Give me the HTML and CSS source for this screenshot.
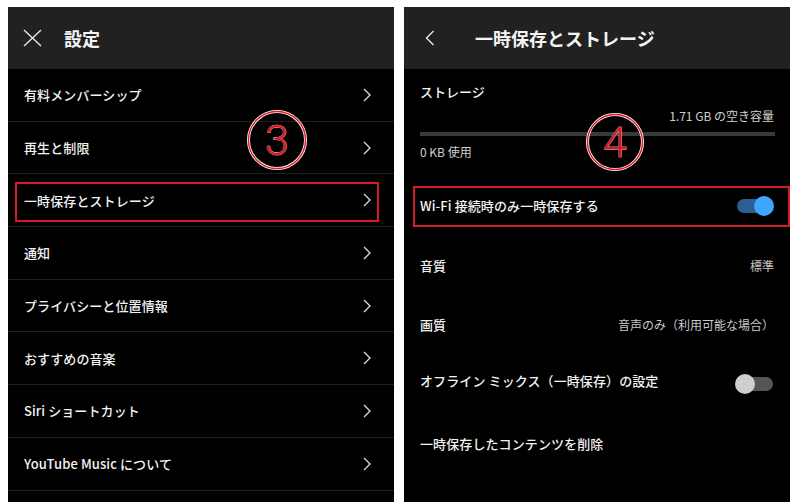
FILE: index.html
```html
<!DOCTYPE html>
<html lang="ja">
<head>
<meta charset="utf-8">
<link rel="stylesheet" href="styles.css">
</head>
<body>
<div class="page">
  <section class="panel">
    <header class="bar">
      <svg class="close" width="19" height="18" viewBox="0 0 19 18"><path d="M1 1 L18 17 M18 1 L1 17" stroke="#e6e6e6" stroke-width="1.4" fill="none"/></svg>
      <h1 class="title">設定</h1>
    </header>
    <ul class="menu">
      <li class="item"><span>有料メンバーシップ</span><svg class="chev" width="8" height="14" viewBox="0 0 8 14"><path d="M1 1 L7 7 L1 13" stroke="#d8d8d8" stroke-width="1.4" fill="none"/></svg></li>
      <li class="item"><span>再生と制限</span><svg class="chev" width="8" height="14" viewBox="0 0 8 14"><path d="M1 1 L7 7 L1 13" stroke="#d8d8d8" stroke-width="1.4" fill="none"/></svg></li>
      <li class="item marked"><span>一時保存とストレージ</span><svg class="chev" width="8" height="14" viewBox="0 0 8 14"><path d="M1 1 L7 7 L1 13" stroke="#d8d8d8" stroke-width="1.4" fill="none"/></svg></li>
      <li class="item"><span>通知</span><svg class="chev" width="8" height="14" viewBox="0 0 8 14"><path d="M1 1 L7 7 L1 13" stroke="#d8d8d8" stroke-width="1.4" fill="none"/></svg></li>
      <li class="item"><span>プライバシーと位置情報</span><svg class="chev" width="8" height="14" viewBox="0 0 8 14"><path d="M1 1 L7 7 L1 13" stroke="#d8d8d8" stroke-width="1.4" fill="none"/></svg></li>
      <li class="item"><span>おすすめの音楽</span><svg class="chev" width="8" height="14" viewBox="0 0 8 14"><path d="M1 1 L7 7 L1 13" stroke="#d8d8d8" stroke-width="1.4" fill="none"/></svg></li>
      <li class="item"><span>Siri ショートカット</span><svg class="chev" width="8" height="14" viewBox="0 0 8 14"><path d="M1 1 L7 7 L1 13" stroke="#d8d8d8" stroke-width="1.4" fill="none"/></svg></li>
      <li class="item"><span>YouTube Music について</span><svg class="chev" width="8" height="14" viewBox="0 0 8 14"><path d="M1 1 L7 7 L1 13" stroke="#d8d8d8" stroke-width="1.4" fill="none"/></svg></li>
    </ul>
    <svg class="badge badge-3" width="64" height="64" viewBox="0 0 64 64">
      <circle cx="32" cy="32" r="28.5" fill="none" stroke="#ffffff" stroke-width="3"/>
      <circle cx="32" cy="32" r="28.5" fill="none" stroke="#e3151f" stroke-width="1.4"/>
      <text x="32" y="47" text-anchor="middle" class="badge-num">3</text>
    </svg>
  </section>

  <section class="panel">
    <header class="bar">
      <svg class="back" width="10" height="16" viewBox="0 0 10 16"><path d="M8.5 1 L1.5 8 L8.5 15" stroke="#e6e6e6" stroke-width="1.4" fill="none"/></svg>
      <h1 class="title title-r">一時保存とストレージ</h1>
    </header>
    <div class="storage">
      <div class="st-title">ストレージ</div>
      <div class="st-free">1.71 GB の空き容量</div>
      <div class="st-bar"></div>
      <div class="st-used">0 KB 使用</div>
    </div>
    <div class="row marked-r"><span class="label">Wi-Fi 接続時のみ一時保存する</span><span class="toggle on"><span class="knob"></span></span></div>
    <div class="row"><span class="label">音質</span><span class="value">標準</span></div>
    <div class="row"><span class="label">画質</span><span class="value">音声のみ（利用可能な場合）</span></div>
    <div class="row"><span class="label up">オフライン ミックス（一時保存）の設定</span><span class="toggle off"><span class="knob"></span></span></div>
    <div class="row"><span class="label">一時保存したコンテンツを削除</span></div>
    <svg class="badge badge-4" width="64" height="64" viewBox="0 0 64 64">
      <circle cx="32" cy="32" r="27.5" fill="none" stroke="#ffffff" stroke-width="3"/>
      <circle cx="32" cy="32" r="27.5" fill="none" stroke="#e3151f" stroke-width="1.4"/>
      <text x="32" y="47" text-anchor="middle" class="badge-num">4</text>
    </svg>
  </section>
</div>
</body>
</html>
```

FILE: styles.css
```css
* { box-sizing: border-box; }
html, body { margin: 0; padding: 0; background: #ffffff; }
body {
  width: 798px;
  height: 502px;
  overflow: hidden;
  font-family: "Noto Sans CJK JP", "Noto Sans", "Liberation Sans", sans-serif;
  color: #ffffff;
}
.page {
  display: flex;
  gap: 10px;
  padding: 7px 8px 0 8px;
  height: 502px;
}
.panel {
  position: relative;
  width: 386px;
  height: 495px;
  background: #000000;
  overflow: hidden;
}
.bar {
  height: 62px;
  background: #212121;
  display: flex;
  align-items: center;
}
.close { margin-left: 15px; margin-right: 22px; }
.back { margin-left: 21px; margin-right: 40px; }
.title {
  margin: 0;
  font-size: 18px;
  font-weight: 700;
  color: #f4f4f4;
  line-height: 24px;
}
.menu {
  list-style: none;
  margin: 0;
  padding: 0;
}
.item {
  position: relative;
  height: 52.7px;
  border-bottom: 1px solid #1e1e1e;
  display: flex;
  align-items: center;
  justify-content: space-between;
  padding: 0 23px 0 16px;
  font-size: 13px;
  font-weight: 500;
  letter-spacing: 0.1px;
  color: #f2f2f2;
}
.marked::after {
  content: "";
  position: absolute;
  left: 7px;
  right: 15px;
  top: 8px;
  bottom: 4px;
  border: 2px solid #d9182b;
}
.storage {
  padding: 13px 16px 0 16px;
}
.st-title {
  font-size: 13px;
  font-weight: 500;
  line-height: 20px;
  color: #f2f2f2;
}
.st-free {
  margin-top: 5px;
  text-align: right;
  font-size: 12px;
  line-height: 18px;
  color: #cfcfcf;
}
.st-bar {
  margin-top: 7px;
  height: 4px;
  background: #3a3a3a;
  margin-right: -1px;
}
.st-used {
  margin-top: 7px;
  font-size: 12px;
  line-height: 18px;
  color: #cfcfcf;
}
.row {
  position: relative;
  height: 59.4px;
  display: flex;
  align-items: center;
  justify-content: space-between;
  padding: 0 16px;
}
.storage + .row { margin-top: 15px; }
.label {
  font-size: 13px;
  font-weight: 500;
  letter-spacing: 0.1px;
  color: #f2f2f2;
}
.label.up { position: relative; top: -3px; }
.value {
  font-size: 12px;
  color: #c8c8c8;
}
.marked-r::after {
  content: "";
  position: absolute;
  left: 9px;
  right: 0px;
  top: 10px;
  bottom: 8px;
  border: 2px solid #d9182b;
}
.toggle {
  position: relative;
  width: 36px;
  height: 14px;
  border-radius: 7px;
  margin-right: 1px;
}
.toggle.on { background: #2b5f91; }
.toggle.off { background: #555555; }
.knob {
  position: absolute;
  top: -3px;
  width: 20px;
  height: 20px;
  border-radius: 50%;
}
.on .knob { right: -1px; background: #3ea6ff; }
.off .knob { left: -2px; background: #cfcfd2; }
.badge {
  position: absolute;
}
.badge-3 { left: 237px; top: 101px; }
.badge-4 { left: 179px; top: 103px; }
.badge-num {
  font-family: "Roboto", "Liberation Sans", sans-serif;
  font-size: 43px;
  font-weight: 300;
  fill: #e3151f;
  stroke: #ffffff;
  stroke-width: 0.5px;
  paint-order: stroke;
}
```
